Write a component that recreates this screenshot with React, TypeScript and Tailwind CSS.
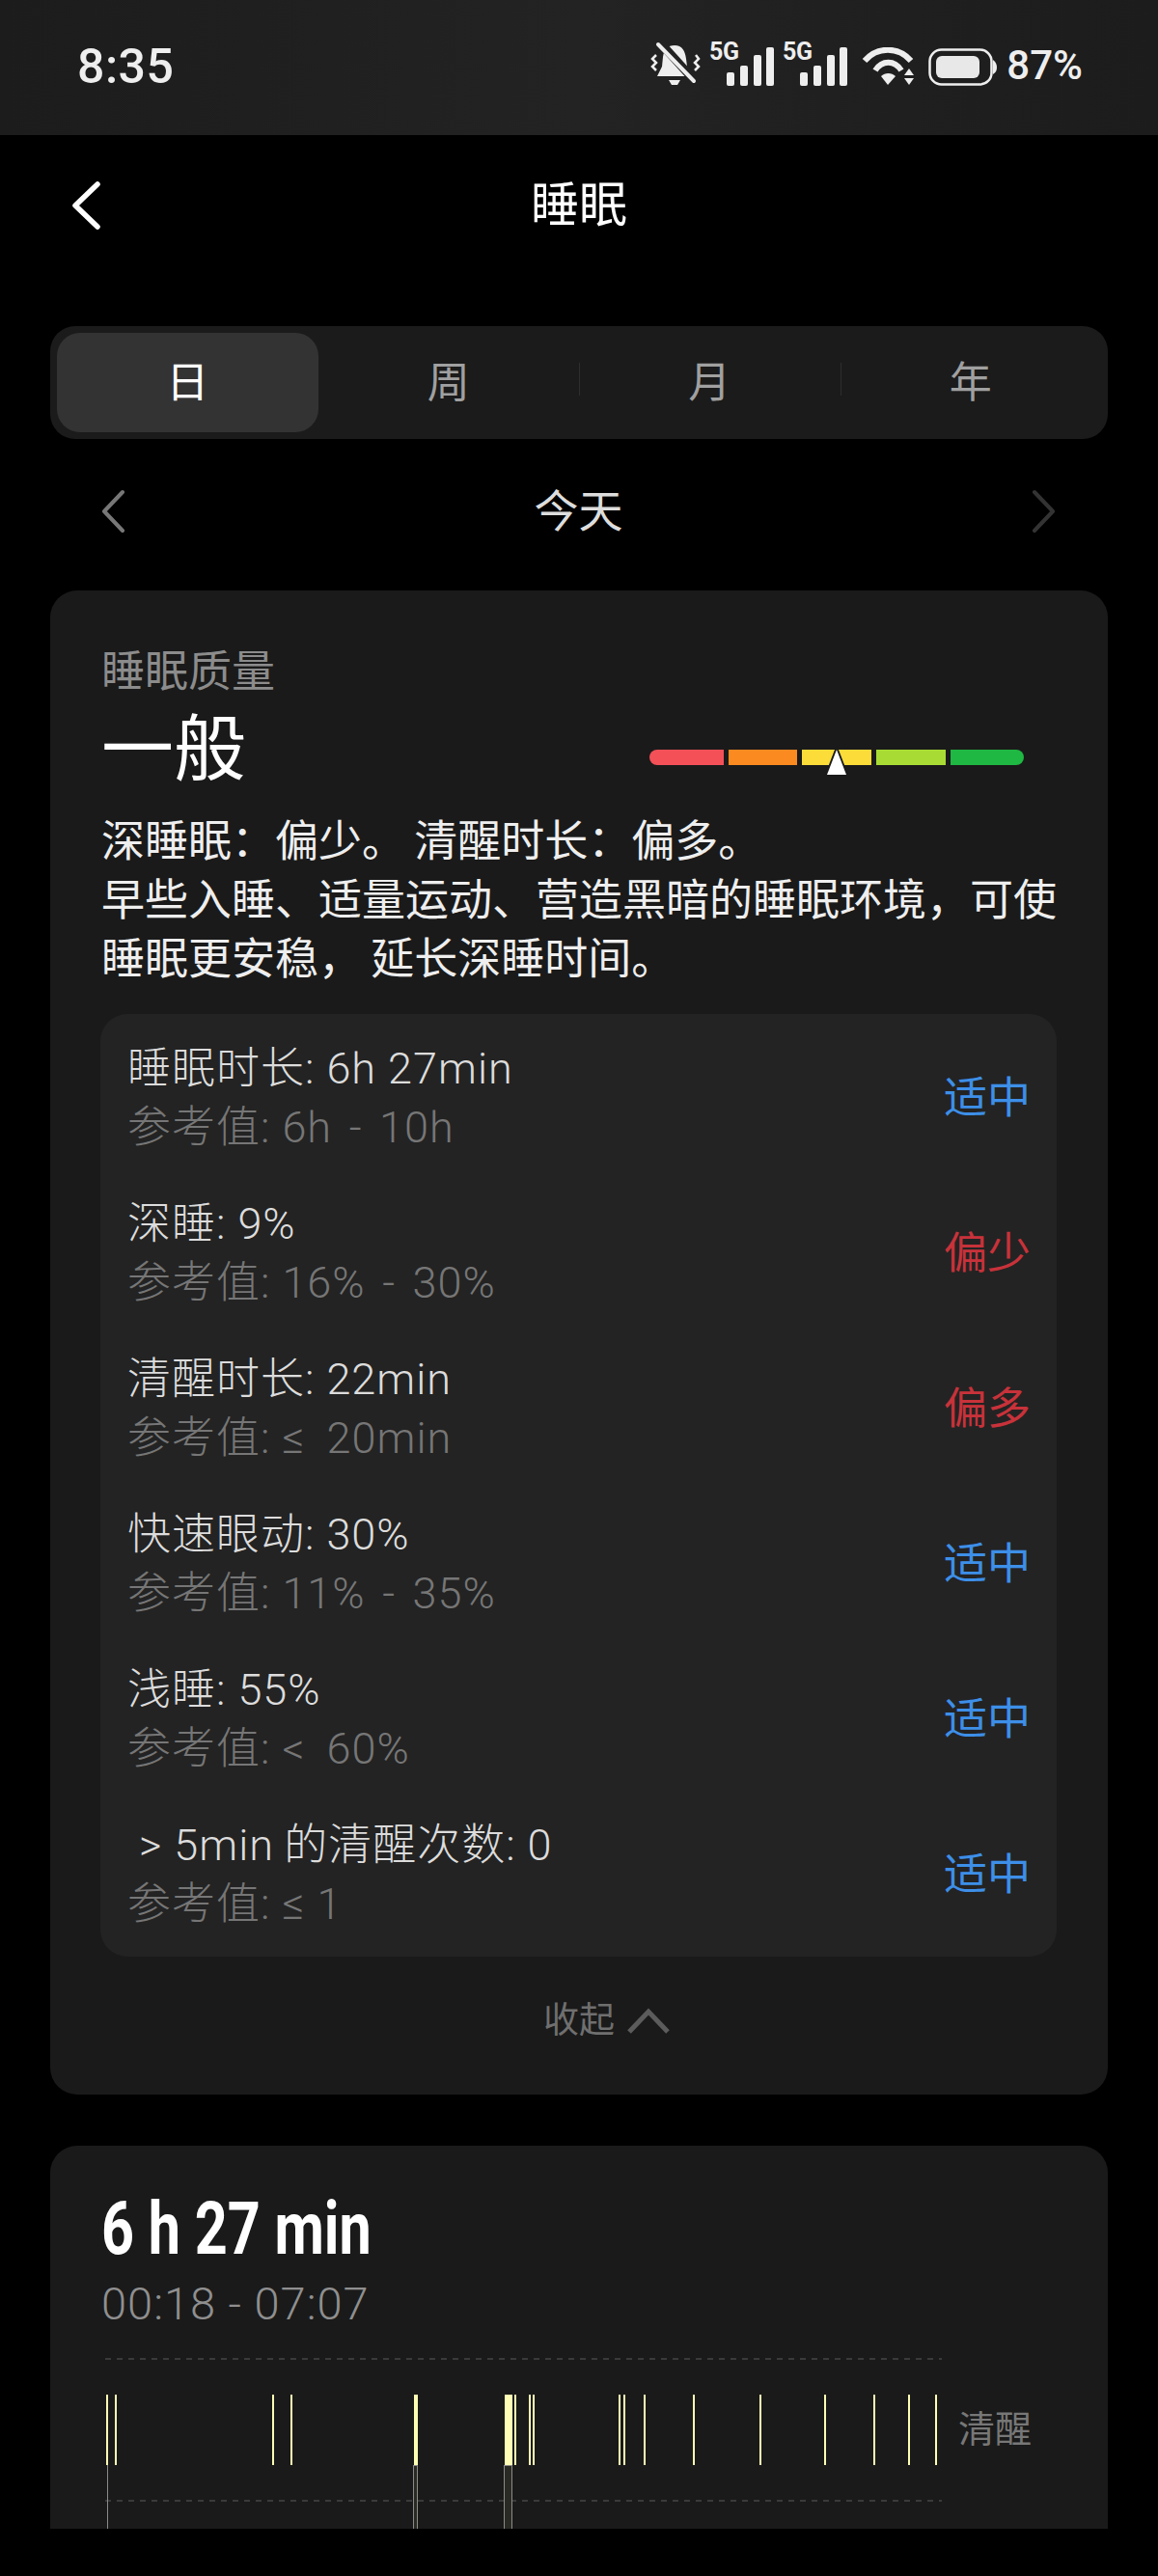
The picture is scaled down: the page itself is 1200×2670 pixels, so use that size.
const sans = `font-['Roboto','Noto_Sans_CJK_SC',sans-serif]`;

const metrics = [
  { label: "睡眠时长: 6h 27min", ref: "参考值: 6h \u200a-\u200a 10h", tag: "适中", good: true },
  { label: "深睡: 9%", ref: "参考值: 16% \u200a-\u200a 30%", tag: "偏少", good: false },
  { label: "清醒时长: 22min", ref: "参考值: ≤\u2009 20min", tag: "偏多", good: false },
  { label: "快速眼动: 30%", ref: "参考值: 11% \u200a-\u200a 35%", tag: "适中", good: true },
  { label: "浅睡: 55%", ref: "参考值: <\u2009 60%", tag: "适中", good: true },
  { label: "\u00a0> 5min\u2009的清醒次数: 0", ref: "参考值: ≤ 1", tag: "适中", good: true },
];

const wakeBars = [
  [110, 2], [119, 2], [282, 2], [301, 2], [429, 4], [523, 8], [533, 2], [548, 2], [552, 2],
  [641, 2], [646, 2], [667, 2], [718, 2], [787, 2], [854, 2], [905, 2], [941, 2], [969, 2],
];

function Signal() {
  return (
    <svg width="67" height="50" viewBox="0 0 67 50" className="shrink-0 -mt-[4px]">
      <text x="0" y="23" fontSize="25" fontWeight="700" fontFamily="Roboto" fill="#eee" textLength="31">5G</text>
      <rect x="18" y="36" width="8" height="14" rx="2" fill="#eee" />
      <rect x="32" y="29" width="8" height="21" rx="2" fill="#eee" />
      <rect x="46" y="18" width="8" height="32" rx="2" fill="#eee" />
      <rect x="59" y="10" width="8" height="40" rx="2" fill="#eee" />
    </svg>
  );
}

function StatusBar() {
  return (
    <div className={`h-[140px] shrink-0 flex items-start justify-between pl-[80px] pr-[78px] bg-linear-to-r from-[#1c1c1c] via-[#232323] to-[#1c1c1c] text-[#eeeeee] ${sans}`}>
      <span className="mt-[41px] text-[50px] leading-[56px] font-medium tracking-[0.5px]">8:35</span>
      <div className="mt-[43px] flex items-start">
        {/* muted bell */}
        <svg width="52" height="46" viewBox="0 0 52 46" className="mr-[9px]">
          <path d="M25 4C33 4 36 10 37 18L38 26L43 36L7 36L12 26L13 16C14 8 18 4 25 4Z" fill="#eee" />
          <path d="M19 40H31L28 45H22Z" fill="#eee" />
          <path d="M9 0L47 42" stroke="#222" strokeWidth="9" />
          <path d="M8 3L45 41" stroke="#eee" strokeWidth="4" strokeLinecap="round" />
          <path d="M6 14L2 18L6 22L2 26L6 30" stroke="#eee" strokeWidth="2.5" fill="none" />
          <path d="M47 14L50 18L46 22L50 26L46 30" stroke="#eee" strokeWidth="2.5" fill="none" />
        </svg>
        <Signal />
        <div className="w-[9px]" />
        <Signal />
        <svg width="56" height="40" viewBox="0 0 56 40" className="ml-[15px] mt-[6px]">
          <path d="M3 14C16 -1 38 -1 51 14" stroke="#eee" strokeWidth="6" fill="none" />
          <path d="M14 24C21 13 34 13 41 24" stroke="#eee" strokeWidth="6" fill="none" />
          <path d="M20 30C24 26 31 26 35 30L27 39Z" fill="#eee" />
          <path d="M49 22L54 29H44Z" fill="#eee" />
          <path d="M44 32H54L49 39Z" fill="#eee" />
        </svg>
        <svg width="71" height="39" viewBox="0 0 71 39" className="ml-[13px] mt-[7px]">
          <rect x="1.5" y="1.5" width="64" height="36" rx="12" stroke="#eee" strokeWidth="2.5" fill="none" />
          <rect x="8" y="8" width="45" height="23" rx="6" fill="#e8e8e8" />
          <path d="M67 12C70 14 71 17 71 20C71 23 70 25 67 27Z" fill="#eee" />
        </svg>
        <span className="ml-[10px] mt-[1px] text-[42px] leading-[48px] font-medium">87%</span>
      </div>
    </div>
  );
}

function Gauge() {
  return (
    <div className="relative flex gap-[5px] w-[388px] h-[16px] mr-[34px] mt-[10px]">
      <div className="w-[77px] rounded-l-full bg-[#f45058]" />
      <div className="w-[71px] bg-[#fb8a20]" />
      <div className="w-[72px] bg-[#fbdc38]" />
      <div className="w-[72px] bg-[#a8dc34]" />
      <div className="w-[76px] rounded-r-full bg-[#1fb842]" />
      <svg width="30" height="30" viewBox="0 0 30 30" className="absolute left-[179px] top-[-3px]">
        <path d="M15 2L25 28H5Z" fill="#fff" stroke="#1a1a1a" strokeWidth="3" />
        <path d="M15 3L25 29H5Z" fill="#fff" />
      </svg>
    </div>
  );
}

export default function App() {
  return (
    <div className={`w-[1200px] h-[2670px] bg-black overflow-hidden ${sans}`}>
      <div className="h-[2621px] overflow-hidden flex flex-col">
        <StatusBar />

        {/* title bar */}
        <div className="relative h-[198px] shrink-0 flex items-start justify-center pt-[43px]">
          <svg width="32" height="50" viewBox="0 0 32 50" className="absolute left-[73px] top-[48px]">
            <path d="M28 3L5 25L28 47" stroke="#fff" strokeWidth="5.5" fill="none" strokeLinecap="round" strokeLinejoin="round" />
          </svg>
          <span className="text-[50px] leading-[60px] text-white">睡眠</span>
        </div>

        {/* range tabs */}
        <div className="mx-[52px] h-[117px] shrink-0 rounded-[26px] bg-[#1b1b1b] p-[7px] grid grid-cols-4 text-[44px]">
          <div className="rounded-[24px] bg-[#333333] flex items-center justify-center text-white">日</div>
          <div className="flex items-center justify-center text-[#a0a0a0]">周</div>
          <div className="flex items-center justify-center text-[#a0a0a0] relative">
            月
            <div className="absolute left-0 top-[31px] h-[34px] w-[1px] bg-[#2e2e2e]" />
          </div>
          <div className="flex items-center justify-center text-[#a0a0a0] relative">
            年
            <div className="absolute left-0 top-[31px] h-[34px] w-[1px] bg-[#2e2e2e]" />
          </div>
        </div>

        {/* date row */}
        <div className="mt-[40px] ml-[104px] mr-[105px] h-[70px] shrink-0 flex items-center justify-between text-[46px] text-[#dddddd]">
          <svg width="26" height="46" viewBox="0 0 26 46">
            <path d="M23 3L4 23L23 43" stroke="#777" strokeWidth="4" fill="none" strokeLinecap="round" strokeLinejoin="round" />
          </svg>
          <span>今天</span>
          <svg width="26" height="46" viewBox="0 0 26 46">
            <path d="M3 3L22 23L3 43" stroke="#333333" strokeWidth="4" fill="none" strokeLinecap="round" strokeLinejoin="round" />
          </svg>
        </div>

        {/* sleep quality */}
        <div className="mt-[47px] mx-[52px] h-[1559px] shrink-0 rounded-[28px] bg-[#1a1a1a] pt-[55px] pl-[53px] pr-[53px]">
          <div className="text-[45px] leading-[60px] text-[#8c8c8c]">睡眠质量</div>
          <div className="h-[105px] flex items-center justify-between">
            <span className="-mt-[5px] text-[75px] leading-[90px] text-white">一般</span>
            <Gauge />
          </div>
          <div className="mt-[10px] text-[45px] leading-[61px] text-[#eeeeee] whitespace-nowrap">
            <div>{"深睡眠\uff1a偏少。\u2009清醒时长\uff1a偏多。"}</div>
            <div>{"早些入睡、适量运动、营造黑暗的睡眠环境\uff0c可使"}</div>
            <div>{"睡眠更安稳\uff0c\u2009延长深睡时间。"}</div>
          </div>

          <div className="mt-[26px] -ml-[1px] rounded-[28px] bg-[#232323] pt-[26px] pb-[24px] pl-[28px] pr-[27px] flex flex-col gap-[39px]">
            {metrics.map((m) => (
              <div key={m.label} className="flex items-center justify-between text-[45px] leading-[61px]">
                <div className="tracking-[1px]">
                  <div className="text-[#dcdcdc] font-light">{m.label}</div>
                  <div className="text-[#767676] font-light">{m.ref}</div>
                </div>
                <span className={m.good ? "text-[#3d8fe8]" : "text-[#c8323a]"}>{m.tag}</span>
              </div>
            ))}
          </div>

          <div className="mt-[40px] pl-[58px] flex items-center justify-center gap-[12px] text-[37px] leading-[54px] text-[#6f6f6f]">
            <span>收起</span>
            <svg width="46" height="28" viewBox="0 0 46 28">
              <path d="M3 25L23 4L43 25" stroke="#5c5c5c" strokeWidth="5" fill="none" />
            </svg>
          </div>
        </div>

        {/* duration and stage chart */}
        <div className="mt-[53px] mx-[52px] h-[600px] shrink-0 rounded-[28px] bg-[#1a1a1a] pt-[46px] pl-[53px]">
          <div className="origin-left scale-x-[0.78] text-[76px] leading-[80px] font-bold text-white">6 h 27 min</div>
          <div className="mt-[11px] text-[47px] leading-[54px] font-light tracking-[1px] text-[#8f8f8f]">00:18 - 07:07</div>
          <div className="relative mt-[15px] -ml-[105px] w-[1096px] h-[240px]">
            <svg width="1096" height="240" viewBox="52 2430 1096 240" className="absolute left-[52px] top-0">
              <line x1="109" y1="2445" x2="976" y2="2445" stroke="#3a3a3a" strokeWidth="2" strokeDasharray="6 6" />
              <line x1="109" y1="2592" x2="976" y2="2592" stroke="#3a3a3a" strokeWidth="2" strokeDasharray="6 6" />
              {wakeBars.map(([x, w]) => (
                <rect key={x} x={x} y="2482" width={w} height="73" fill="#fdfdb5" />
              ))}
              <rect x="111" y="2555" width="1" height="70" fill="#8a8a8a" />
              <rect x="428.5" y="2555.5" width="4" height="70" fill="#2a2a24" stroke="#8a8a8a" />
              <rect x="522.5" y="2555.5" width="8" height="70" fill="#2a2a24" stroke="#8a8a8a" />
            </svg>
            <span className="absolute left-[993px] top-[64px] text-[38px] leading-[48px] text-[#777777]">清醒</span>
          </div>
        </div>
      </div>
    </div>
  );
}
